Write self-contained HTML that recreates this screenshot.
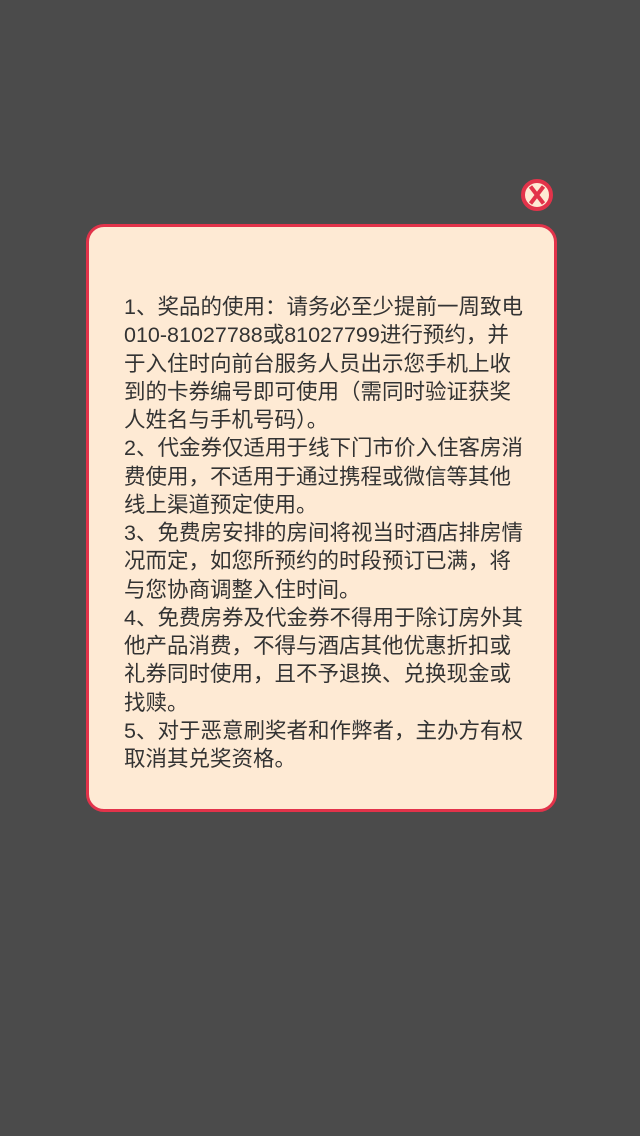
<!DOCTYPE html>
<html><head><meta charset="utf-8"><style>
html,body{margin:0;padding:0;width:640px;height:1136px;background:#4b4b4b;overflow:hidden}
.box{position:absolute;left:86px;top:224px;width:465px;height:582px;background:#feead4;border:3px solid #e2334a;border-radius:18px;}
.t{position:absolute;left:124px;top:293px;font-family:"Liberation Sans","Noto Sans CJK SC",sans-serif;font-size:21.5px;line-height:28.25px;color:#333;white-space:nowrap;}
svg{position:absolute;left:520px;top:178px}
</style></head><body>
<div class="box"></div>
<div class="t">1、奖品的使用：请务必至少提前一周致电<br>010-81027788或81027799进行预约，并<br>于入住时向前台服务人员出示您手机上收<br>到的卡券编号即可使用（需同时验证获奖<br>人姓名与手机号码）。<br>2、代金券仅适用于线下门市价入住客房消<br>费使用，不适用于通过携程或微信等其他<br>线上渠道预定使用。<br>3、免费房安排的房间将视当时酒店排房情<br>况而定，如您所预约的时段预订已满，将<br>与您协商调整入住时间。<br>4、免费房券及代金券不得用于除订房外其<br>他产品消费，不得与酒店其他优惠折扣或<br>礼券同时使用，且不予退换、兑换现金或<br>找赎。<br>5、对于恶意刷奖者和作弊者，主办方有权<br>取消其兑奖资格。</div>
<svg width="34" height="34" viewBox="0 0 34 34"><circle cx="17" cy="17" r="14" fill="#feead4" stroke="#e2334a" stroke-width="4"/><path d="M10.5 8.5L23.5 25.5M23.5 8.5L10.5 25.5" stroke="#e2334a" stroke-width="4"/></svg>
</body></html>
